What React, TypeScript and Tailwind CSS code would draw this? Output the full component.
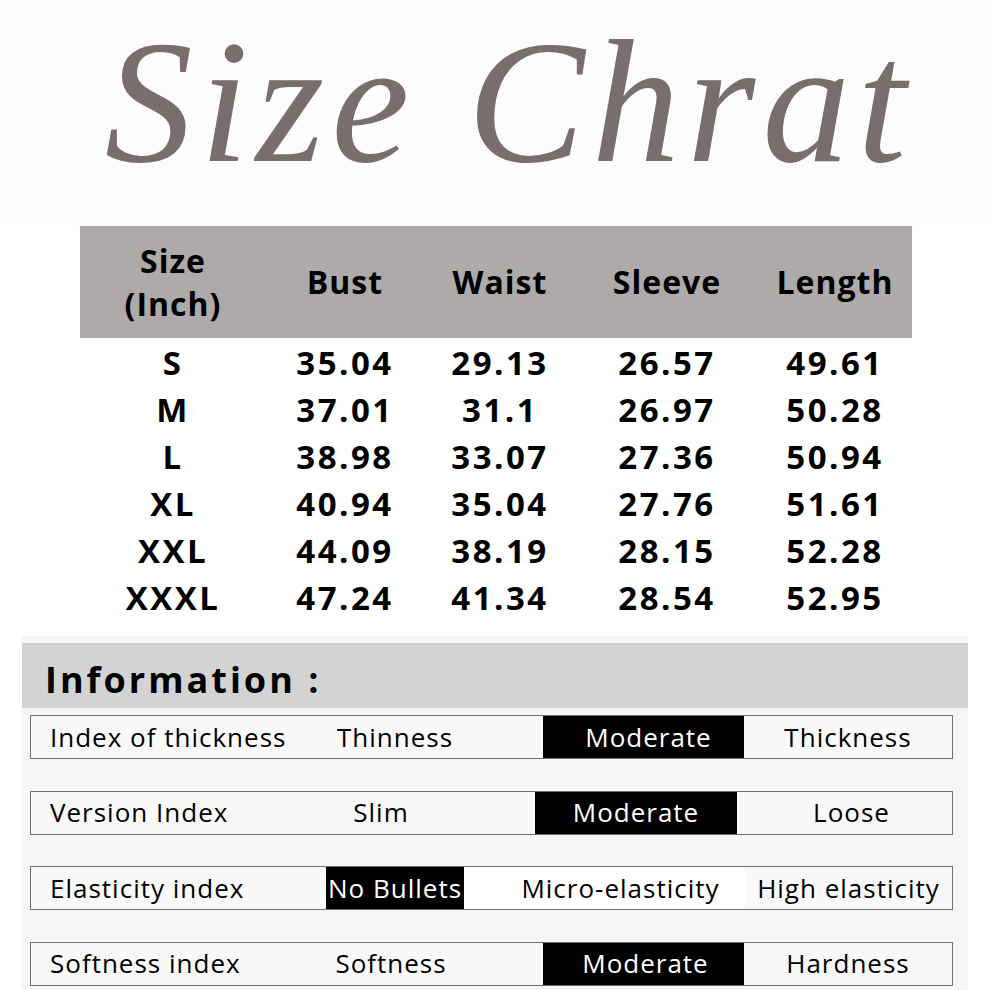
const header = ["Bust", "Waist", "Sleeve", "Length"];

const rows = [
  ["S", "35.04", "29.13", "26.57", "49.61"],
  ["M", "37.01", "31.1", "26.97", "50.28"],
  ["L", "38.98", "33.07", "27.36", "50.94"],
  ["XL", "40.94", "35.04", "27.76", "51.61"],
  ["XXL", "44.09", "38.19", "28.15", "52.28"],
  ["XXXL", "47.24", "41.34", "28.54", "52.95"],
];

type Cell = { text: string; w: string; black?: boolean; white?: boolean; left?: boolean; pad?: string };

// widths measured from the picture, row box starts at x=30
const info: Cell[][] = [
  [
    { text: "Index of thickness", w: "w-[269px]", left: true },
    { text: "Thinness", w: "w-[190px]" },
    { text: "", w: "w-[53px]" },
    { text: "Moderate", w: "w-[201px]", black: true, pad: "pl-[10px]" },
    { text: "Thickness", w: "flex-1" },
  ],
  [
    { text: "Version Index", w: "w-[269px]", left: true },
    { text: "Slim", w: "w-[162px]" },
    { text: "", w: "w-[73px]" },
    { text: "Moderate", w: "w-[202px]", black: true },
    { text: "Loose", w: "flex-1", pad: "pl-[14px]" },
  ],
  [
    { text: "Elasticity index", w: "w-[295px]", left: true },
    { text: "No Bullets", w: "w-[138px]", black: true },
    { text: "Micro-elasticity", w: "w-[281px]", white: true, pad: "pl-[32px]" },
    { text: "High elasticity", w: "flex-1" },
  ],
  [
    { text: "Softness index", w: "w-[269px]", left: true },
    { text: "Softness", w: "w-[182px]" },
    { text: "", w: "w-[61px]" },
    { text: "Moderate", w: "w-[201px]", black: true, pad: "pl-[4px]" },
    { text: "Hardness", w: "flex-1" },
  ],
];

const cols = "grid grid-cols-[186px_158px_152px_182px_154px]";

export default function App() {
  return (
    <div className="w-[990px] h-[990px] overflow-hidden bg-white font-['Open_Sans',sans-serif] text-black">
      {/* Title */}
      <div className="h-[226px] bg-[#fcfcfc] flex justify-center pl-[40px]">
        <h1 className="mt-[10px] pr-[12px] font-['Liberation_Serif',serif] italic text-[176px] leading-[1.05] tracking-[7px] text-[#786e6e]">
          Size Chrat
        </h1>
      </div>

      {/* Size table */}
      <div className="ml-[80px] w-[832px]">
        <div className={`${cols} h-[112px] bg-[#aeaaaa] items-center text-[32px] font-bold tracking-[1px] text-center`}>
          <div className="leading-[43px]">
            Size
            <br />
            (Inch)
          </div>
          {header.map((h) => (
            <div key={h}>{h}</div>
          ))}
        </div>
        {rows.map((r) => (
          <div key={r[0]} className={`${cols} h-[47px] items-center text-[33px] font-bold tracking-[2.5px] text-center`}>
            {r.map((v, i) => (
              <div key={i}>{v}</div>
            ))}
          </div>
        ))}
      </div>

      {/* Information */}
      <div className="mt-[16px] ml-[22px] w-[946px] h-[360px] bg-[#f6f6f6] pt-[7px]">
        <div className="h-[65px] bg-[#d3d3d3] flex items-center pl-[23px] pt-[8px] text-[36px] font-bold tracking-[3px]">
          Information :
        </div>
        <div className="mt-[7px] ml-[8px] w-[923px] flex flex-col gap-[31.5px]">
          {info.map((row, i) => (
            <div key={i} className="h-[44px] border border-[#707070] bg-[#f9f9f9] flex text-[26px] tracking-[1px]">
              {row.map((c, j) => (
                <div
                  key={j}
                  className={`${c.w} h-full flex items-center ${c.left ? "pl-[19px]" : "justify-center"} ${c.pad ?? ""} ${
                    c.black ? "bg-black text-white" : c.white ? "bg-white" : ""
                  }`}
                >
                  {c.text}
                </div>
              ))}
            </div>
          ))}
        </div>
      </div>
    </div>
  );
}
